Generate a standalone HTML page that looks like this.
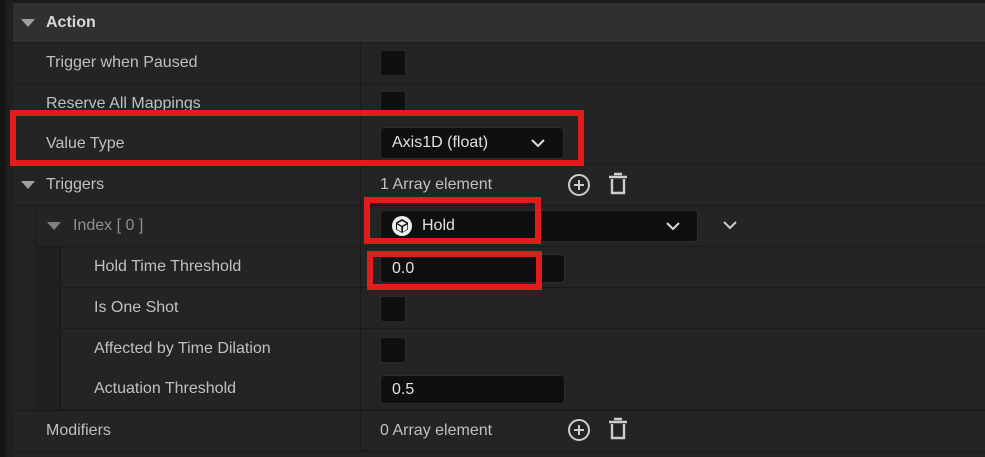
<!DOCTYPE html>
<html><head><style>
*{margin:0;padding:0;box-sizing:border-box}
body{width:985px;height:457px;background:#1a1a1a;position:relative;overflow:hidden;font-family:"Liberation Sans",sans-serif;font-size:16px;color:#c0c0c0}
.a{position:absolute}
.row{position:absolute;left:13px;right:0;height:40px;background:#242424}
.t{position:absolute;top:11px;white-space:nowrap}
.cb{position:absolute;left:380px;width:26px;height:26px;background:#0f0f0f;border-radius:3px;border:1px solid #2a2a2a}
.in{position:absolute;background:#0f0f0f;border-radius:4px;border:1px solid #2c2c2c;color:#e0e0e0}
.red{position:absolute;border:6px solid #e01c1c}
.tri{position:absolute;width:0;height:0;border-left:7px solid transparent;border-right:7px solid transparent;border-top:8px solid #a0a0a0}
.vl{position:absolute;left:347px;top:0;width:1px;height:100%;background:#1a1a1a}
</style></head><body>
<div class="a" style="left:0;top:0;width:6px;height:457px;background:#161616"></div>
<div class="a" style="left:6px;top:0;width:7px;height:457px;background:#1f1f1f"></div>
<div class="row" style="top:3px;height:39px;background:#303030"><div class="tri" style="left:8px;top:16px"></div><div class="t" style="left:33px;font-weight:bold;color:#d8d8d8">Action</div></div>
<div class="row" style="top:43px"><div class="vl"></div><div class="t" style="left:33px">Trigger when Paused</div></div>
<div class="row" style="top:84px"><div class="vl"></div><div class="t" style="left:33px">Reserve All Mappings</div></div>
<div class="row" style="top:124px"><div class="vl"></div><div class="t" style="left:33px">Value Type</div></div>
<div class="row" style="top:165px"><div class="vl"></div><div class="tri" style="left:8px;top:16px"></div><div class="t" style="left:33px">Triggers</div><div class="t" style="left:367px">1 Array element</div></div>
<div class="row" style="top:206px;left:37px;height:40px"><div class="vl" style="left:323px"></div><div class="tri" style="left:10px;top:16px;border-top-color:#808080"></div><div class="t" style="left:36px;color:#909090">Index [ 0 ]</div></div>
<div class="a" style="left:13px;top:206px;width:24px;height:204px;background:#232323;border-right:1px solid #1c1c1c"></div>
<div class="a" style="left:37px;top:247px;width:23px;height:163px;background:#202020;border-right:1px solid #1c1c1c"></div>
<div class="row" style="top:247px;left:61px"><div class="vl" style="left:299px"></div><div class="t" style="left:33px">Hold Time Threshold</div></div>
<div class="row" style="top:288px;left:61px"><div class="vl" style="left:299px"></div><div class="t" style="left:33px">Is One Shot</div></div>
<div class="row" style="top:329px;left:61px"><div class="vl" style="left:299px"></div><div class="t" style="left:33px">Affected by Time Dilation</div></div>
<div class="row" style="top:369px;left:61px"><div class="vl" style="left:299px"></div><div class="t" style="left:33px">Actuation Threshold</div></div>
<div class="row" style="top:411px"><div class="vl"></div><div class="t" style="left:33px">Modifiers</div><div class="t" style="left:367px">0 Array element</div></div>
<div class="row" style="top:452px;height:5px"></div>

<div class="cb" style="top:50px"></div>
<div class="cb" style="top:91px"></div>
<div class="cb" style="top:296px"></div>
<div class="cb" style="top:337px"></div>
<div class="in" style="left:380px;top:127px;width:184px;height:32px"><span class="a" style="left:11px;top:6px">Axis1D (float)</span>
<svg class="a" style="left:150px;top:10px" width="14" height="10"><path d="M1 2l6 6 6-6" stroke="#ddd" stroke-width="2" fill="none"/></svg></div>
<div class="in" style="left:380px;top:210px;width:318px;height:32px"><svg class="a" style="left:10px;top:4px" width="22" height="22" viewBox="0 0 22 22"><circle cx="11" cy="11" r="10" fill="#eee"/><path d="M11 4l6 3.5v7L11 18l-6-3.5v-7z" fill="#111"/><path d="M11 6l4.5 2.3L11 10.8 6.5 8.3z M6 9.5l4.3 2.4v5L6 14.3z M12 11.9l4.3-2.4v4.8L12 16.9z" fill="#eee"/></svg><span class="a" style="left:41px;top:6px">Hold</span>
<svg class="a" style="left:285px;top:10px" width="14" height="10"><path d="M1 2l6 6 6-6" stroke="#ddd" stroke-width="2" fill="none"/></svg></div>
<svg class="a" style="left:723px;top:220px" width="14" height="10"><path d="M1 2l6 6 6-6" stroke="#ccc" stroke-width="2" fill="none"/></svg>
<div class="in" style="left:380px;top:254px;width:185px;height:29px"><span class="a" style="left:11px;top:5px">0.0</span></div>
<div class="in" style="left:380px;top:375px;width:185px;height:29px"><span class="a" style="left:11px;top:5px">0.5</span></div>

<svg class="a" style="left:567px;top:173px" width="24" height="24" viewBox="0 0 24 24"><circle cx="12" cy="12" r="10" stroke="#ccc" stroke-width="2" fill="none"/><path d="M12 7v10M7 12h10" stroke="#ccc" stroke-width="2"/></svg>
<svg class="a" style="left:606px;top:171px" width="24" height="26" viewBox="0 0 24 26"><path d="M8 3h8M3 6h18M6 8v14h12V8" stroke="#ccc" stroke-width="2.4" fill="none"/></svg>
<svg class="a" style="left:567px;top:418px" width="24" height="24" viewBox="0 0 24 24"><circle cx="12" cy="12" r="10" stroke="#ccc" stroke-width="2" fill="none"/><path d="M12 7v10M7 12h10" stroke="#ccc" stroke-width="2"/></svg>
<svg class="a" style="left:606px;top:416px" width="24" height="26" viewBox="0 0 24 26"><path d="M8 3h8M3 6h18M6 8v14h12V8" stroke="#ccc" stroke-width="2.4" fill="none"/></svg>

<div class="red" style="left:10px;top:110px;width:574px;height:56px"></div>
<div class="red" style="left:364px;top:197px;width:177px;height:47px"></div>
<div class="red" style="left:367px;top:251px;width:175px;height:39px"></div>
</body></html>
